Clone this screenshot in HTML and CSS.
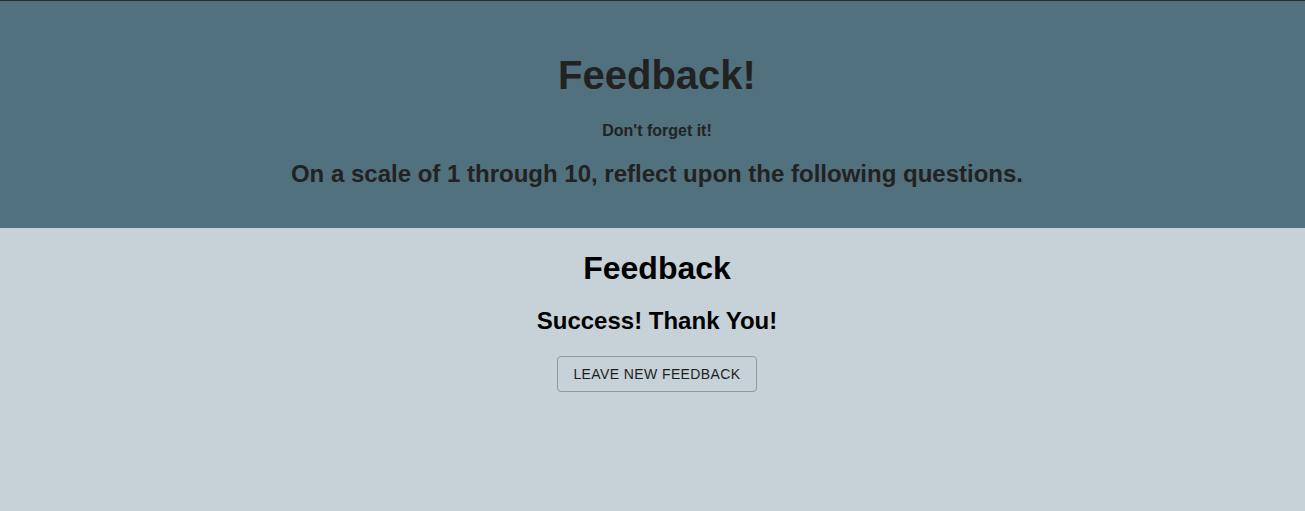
FILE: index.html
```html
<!DOCTYPE html>
<html>
<head>
<meta charset="utf-8">
<link rel="stylesheet" href="styles.css">
</head>
<body>
<header class="hero">
  <h1 class="hero-title">Feedback!</h1>
  <p class="hero-sub">Don't forget it!</p>
  <h3 class="hero-lead">On a scale of 1 through 10, reflect upon the following questions.</h3>
</header>
<main class="content">
  <h2 class="content-title">Feedback</h2>
  <h3 class="content-msg">Success! Thank You!</h3>
  <button class="btn-outline">Leave New Feedback</button>
</main>
</body>
</html>
```
FILE: styles.css
```css
html, body {
  margin: 0;
  padding: 0;
  height: 100%;
}
body {
  font-family: "Liberation Sans", Arial, Helvetica, sans-serif;
  background: #c6d2d7;
  border-top: 1px solid #2a2a2a;
  box-sizing: border-box;
}
.hero {
  background: #51717e;
  color: #222222;
  text-align: center;
  display: flex;
  flex-direction: column;
  align-items: center;
  padding: 50px 0 40px 9px;
}
.hero-title {
  font-size: 40px;
  font-weight: bold;
  margin: 0;
  line-height: 48px;
}
.hero-sub {
  font-size: 16px;
  font-weight: bold;
  margin: 22px 0 0;
  line-height: 20px;
}
.hero-lead {
  font-size: 24px;
  font-weight: bold;
  margin: 19px 0 0;
  line-height: 28px;
}
.content {
  display: flex;
  flex-direction: column;
  align-items: center;
  color: #000;
  padding: 20px 0 0 9px;
}
.content-title {
  font-size: 32px;
  font-weight: bold;
  margin: 0;
  line-height: 40px;
}
.content-msg {
  font-size: 24px;
  font-weight: bold;
  margin: 17px 0 0;
  line-height: 32px;
}
.btn-outline {
  margin-top: 19px;
  font-family: "Liberation Sans", Arial, Helvetica, sans-serif;
  font-size: 14px;
  letter-spacing: 0.4px;
  text-transform: uppercase;
  color: #1e1e1e;
  background: transparent;
  border: 1px solid #8e989c;
  border-radius: 4px;
  padding: 4px 15px;
  line-height: 26px;
  cursor: pointer;
}
```
